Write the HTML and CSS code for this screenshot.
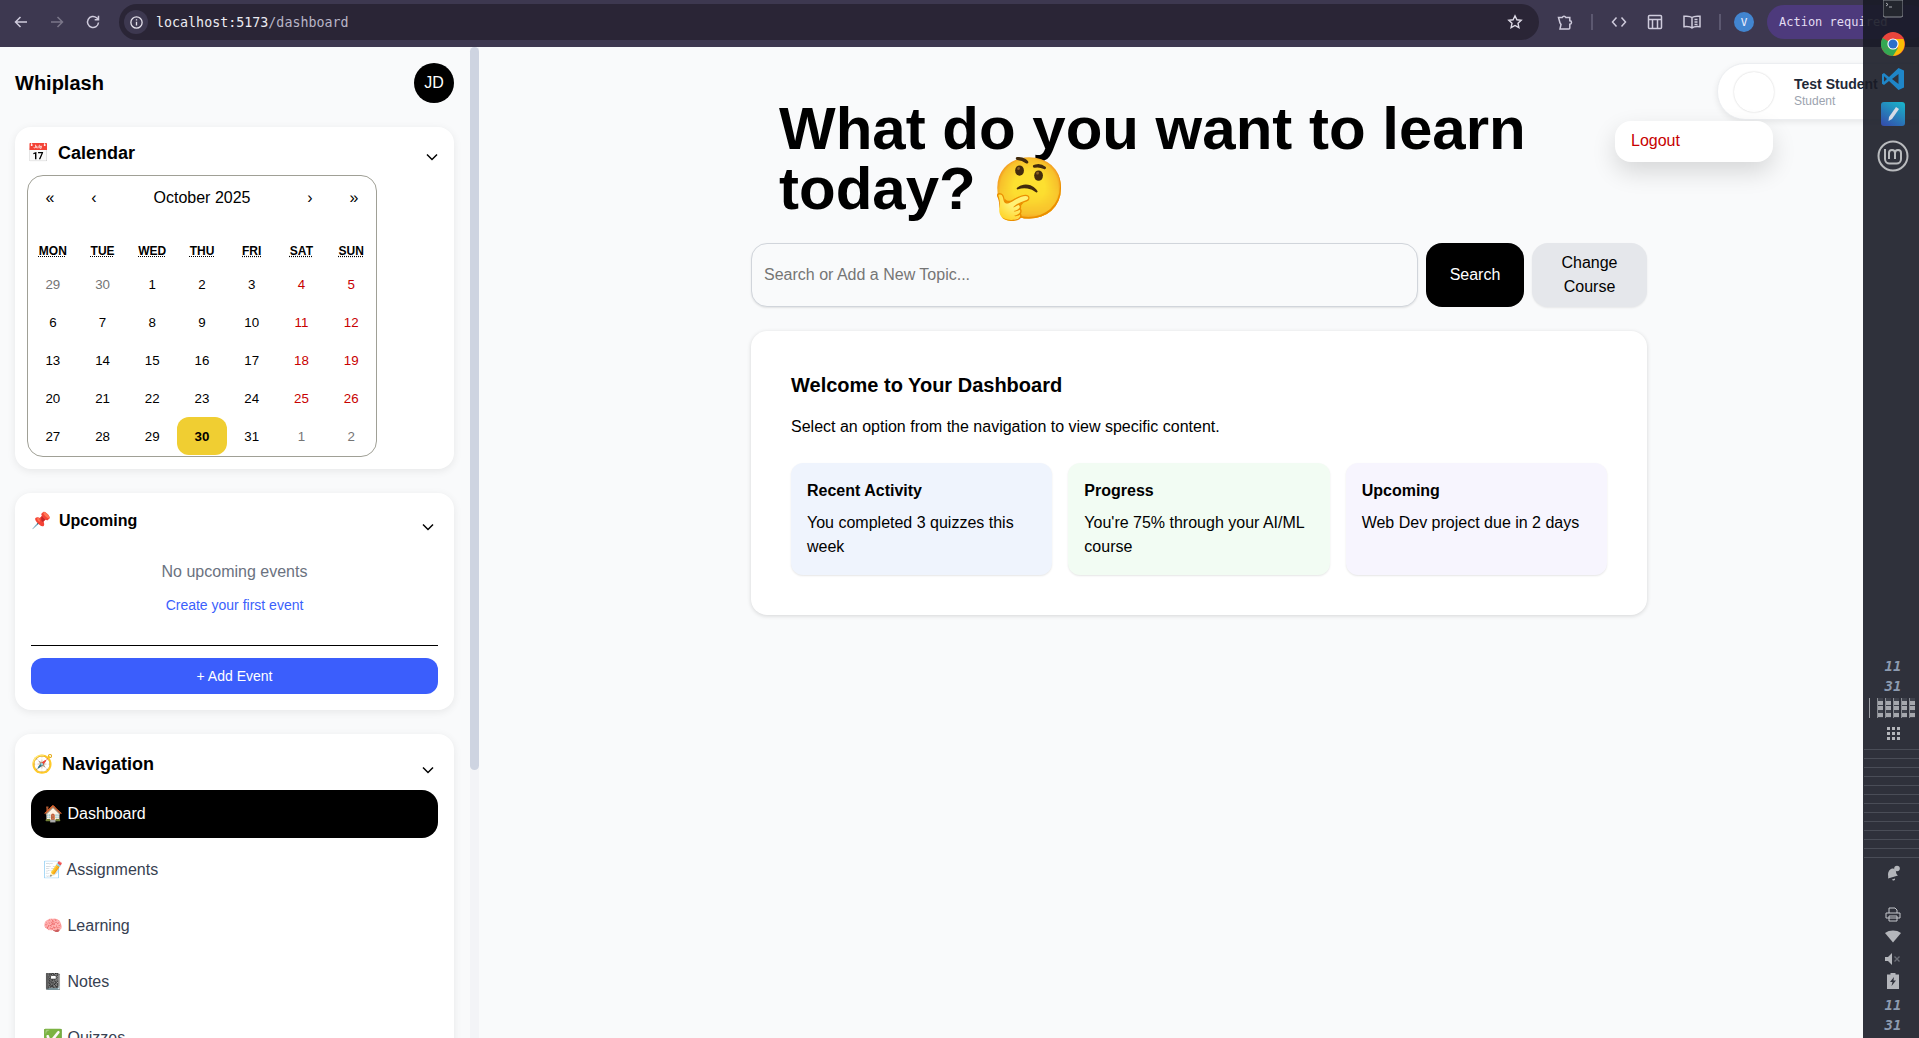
FILE: index.html
```html
<!DOCTYPE html>
<html lang="en">
<head>
    <meta charset="UTF-8">
    <meta name="viewport" content="width=device-width, initial-scale=1.0">
    <title>Whiplash</title>
    <link rel="stylesheet" href="styles.css">
</head>
<body>
    <header class="toolbar">
        <svg class="tool-icon" viewBox="0 0 16 16"><path d="M14 8H2.5M7.5 3 2.5 8l5 5"/></svg>
        <svg class="tool-icon dim" viewBox="0 0 16 16"><path d="M2 8h11.5M8.5 3l5 5-5 5"/></svg>
        <svg class="tool-icon" viewBox="0 0 16 16"><path d="M13.5 8.5A5.5 5.5 0 1 1 11.6 3.8L13.5 5.5M13.5 1.8v3.9H9.7"/></svg>
        <div class="omnibox">
            <span class="site-info">
                <svg viewBox="0 0 16 16"><circle cx="8" cy="8" r="6"/><path d="M8 7.2v4M8 4.6v1.2"/></svg>
            </span>
            <span class="url">localhost:5173<span class="url-path">/dashboard</span></span>
            <svg class="star" viewBox="0 0 16 16"><path d="m8 1.8 1.9 4 4.3.5-3.2 3 .9 4.4L8 11.5l-3.900 2.200.9-4.400-3.200-3 4.300-.5z"/></svg>
        </div>
        <svg class="tool-icon puzzle" viewBox="0 0 16 16"><path d="M1.500 3.500h3.700a2 2 0 0 1 3.600 0h4v3.300a1.700 1.700 0 0 1 0 3.400v3.800a1 1 0 0 1-1 1H3l1-4.500-1-1.500z"/></svg>
        <span class="tool-sep"></span>
        <svg class="tool-icon code" viewBox="0 0 16 16"><path d="M5.500 3.500 1.500 8l4 4.500M10.500 3.500l4 4.500-4 4.500"/></svg>
        <svg class="tool-icon panel" viewBox="0 0 16 16"><rect x="1.500" y="1.500" width="13" height="13" rx="1"/><path d="M1.500 5.500h13M5.500 5.500v9M10.500 5.500v9"/></svg>
        <svg class="tool-icon book" viewBox="0 0 18 16"><path d="M9 3.500C7.500 2.300 4 2 1 2.300v10.400c3-.3 6.500 0 8 1.300 1.500-1.300 5-1.600 8-1.300V2.300C14 2 10.500 2.300 9 3.500zM9 3.500V14M11.500 5.500h3M11.500 8h3M11.500 10.500h3"/></svg>
        <span class="tool-sep last"></span>
        <span class="profile-dot">V</span>
        <span class="action-pill">Action required</span>
    </header>

    <div class="app">
        <aside class="sidebar">
            <div class="sidebar-inner">
                <div class="brand-row">
                    <span class="brand">Whiplash</span>
                    <span class="avatar">JD</span>
                </div>

                <section class="panel-card calendar-card">
                    <div class="panel-head">
                        <h3 class="panel-title big"><span class="head-emoji">📅</span>Calendar</h3>
                        <svg class="chevron" viewBox="0 0 12 8"><path d="m1 1.500 5 5 5-5"/></svg>
                    </div>
                    <div class="calendar">
                        <div class="cal-nav">
                            <span>«</span><span>‹</span><span class="cal-label">October 2025</span><span>›</span><span>»</span>
                        </div>
                        <div class="cal-weekdays">
                            <span>Mon</span><span>Tue</span><span>Wed</span><span>Thu</span><span>Fri</span><span>Sat</span><span>Sun</span>
                        </div>
                        <div class="cal-days">
                            <span class="other">29</span><span class="other">30</span><span>1</span><span>2</span><span>3</span><span class="weekend">4</span><span class="weekend">5</span>
                            <span>6</span><span>7</span><span>8</span><span>9</span><span>10</span><span class="weekend">11</span><span class="weekend">12</span>
                            <span>13</span><span>14</span><span>15</span><span>16</span><span>17</span><span class="weekend">18</span><span class="weekend">19</span>
                            <span>20</span><span>21</span><span>22</span><span>23</span><span>24</span><span class="weekend">25</span><span class="weekend">26</span>
                            <span>27</span><span>28</span><span>29</span><span class="today">30</span><span>31</span><span class="other">1</span><span class="other">2</span>
                        </div>
                    </div>
                </section>

                <section class="panel-card">
                    <div class="panel-head wide">
                        <h3 class="panel-title"><span class="head-emoji small">📌</span>Upcoming</h3>
                        <svg class="chevron" viewBox="0 0 12 8"><path d="m1 1.500 5 5 5-5"/></svg>
                    </div>
                    <p class="empty-text">No upcoming events</p>
                    <a class="empty-link" href="#">Create your first event</a>
                    <hr class="panel-rule">
                    <button class="add-event">+ Add Event</button>
                </section>

                <section class="panel-card nav-card">
                    <div class="panel-head wide">
                        <h3 class="panel-title big"><span class="head-emoji">🧭</span>Navigation</h3>
                        <svg class="chevron" viewBox="0 0 12 8"><path d="m1 1.500 5 5 5-5"/></svg>
                    </div>
                    <nav class="side-nav">
                        <a class="active" href="#">🏠 Dashboard</a>
                        <a href="#">📝 Assignments</a>
                        <a href="#">🧠 Learning</a>
                        <a href="#">📓 Notes</a>
                        <a href="#">✅ Quizzes</a>
                    </nav>
                </section>
            </div>
            <div class="scroll-track"><div class="scroll-thumb"></div></div>
        </aside>

        <main class="main">
            <div class="user-pill">
                <span class="user-photo"></span>
                <div>
                    <div class="user-name">Test Student</div>
                    <div class="user-role">Student</div>
                </div>
            </div>
            <div class="user-menu">Logout</div>

            <div class="content">
                <h1 class="hero">What do you want to learn today? 🤔</h1>
                <div class="search-row">
                    <input class="search-input" type="text" placeholder="Search or Add a New Topic...">
                    <button class="search-btn">Search</button>
                    <button class="course-btn">Change Course</button>
                </div>
                <section class="welcome">
                    <h2>Welcome to Your Dashboard</h2>
                    <p>Select an option from the navigation to view specific content.</p>
                    <div class="welcome-grid">
                        <div class="info-card blue">
                            <h4>Recent Activity</h4>
                            <p>You completed 3 quizzes this week</p>
                        </div>
                        <div class="info-card green">
                            <h4>Progress</h4>
                            <p>You're 75% through your AI/ML course</p>
                        </div>
                        <div class="info-card purple">
                            <h4>Upcoming</h4>
                            <p>Web Dev project due in 2 days</p>
                        </div>
                    </div>
                </section>
            </div>
        </main>
    </div>

    <!-- desktop panel, sits over the browser window -->
    <aside class="dock">
        <svg class="dock-terminal" viewBox="0 0 20 18"><path class="term-body" d="M0 0h20v15a2 2 0 0 1-2 2H2a2 2 0 0 1-2-2z"/><path class="term-mark" d="m3 3 2 1.500-2 1.500M6 7h3"/></svg>
        <svg class="dock-app chrome" viewBox="0 0 24 24">
            <circle cx="12" cy="12" r="12" fill="#e8453c"/>
            <path d="M12 12 1.600 18A12 12 0 0 1 1.600 6z" fill="#34a853"/>
            <path d="M12 12 1.600 18A12 12 0 0 0 12 24l6-6z" fill="#34a853"/>
            <path d="M12 7h10.400A12 12 0 0 1 12 24l5-8z" fill="#fbbc05"/>
            <circle cx="12" cy="12" r="5.600" fill="#fff"/>
            <circle cx="12" cy="12" r="4.500" fill="#2a6fc9"/>
        </svg>
        <svg class="dock-app vscode" viewBox="0 0 24 24">
            <path d="M17.500 1 23 3.500v17L17.500 23 8 14l-5 4-2-1.200V7.200L3 6l5 4z" fill="#1f86c8"/>
            <path d="M17.500 7 11 12l6.500 5z" fill="#2f323c"/>
            <path d="M3 9.200v5.600L6 12z" fill="#2f323c"/>
        </svg>
        <svg class="dock-app pen" viewBox="0 0 24 24">
            <defs><linearGradient id="penfill" x1="0.800" y1="0" x2="0.200" y2="1"><stop offset="0" stop-color="#1ab0c8"/><stop offset="1" stop-color="#3350ac"/></linearGradient></defs>
            <rect width="24" height="24" rx="3" fill="url(#penfill)"/>
            <path d="M15 5l3 2-7 10-3.500 2 .5-4z" fill="#d5dbe6"/>
        </svg>
        <svg class="dock-mint" viewBox="0 0 32 32">
            <circle cx="16" cy="16" r="14.500"/>
            <path d="M8 9v10a4.500 4.500 0 0 0 4.500 4.500h7a4.500 4.500 0 0 0 4.500-4.500v-6a3 3 0 0 0-6 0v6M18 13a3 3 0 0 0-6 0v6"/>
        </svg>

        <div class="dock-clock first"><span>11</span><span>31</span></div>
        <div class="pager">
            <span class="pager-bar"></span>
            <span class="pager-cell"></span><span class="pager-cell"></span><span class="pager-cell"></span><span class="pager-cell"></span><span class="pager-cell"></span>
        </div>
        <svg class="dock-dots" viewBox="0 0 13 13">
            <rect width="3" height="3"/><rect x="5" width="3" height="3"/><rect x="10" width="3" height="3"/>
            <rect y="5" width="3" height="3"/><rect x="5" y="5" width="3" height="3"/><rect x="10" y="5" width="3" height="3"/>
            <rect y="10" width="3" height="3"/><rect x="5" y="10" width="3" height="3"/><rect x="10" y="10" width="3" height="3"/>
        </svg>
        <div class="window-list">
            <span></span><span></span><span></span><span></span><span></span><span></span><span></span><span></span><span></span><span></span><span></span><span></span><span></span>
        </div>
        <svg class="tray bell" viewBox="0 0 16 16"><path d="M7 3.500C9 3 11 4.500 11 6.500c0 2 .8 3 2 4l-10 3c.5-1.500 0-3 0-4.500 0-2.500 2-5 4-5.500zM7 14.500l3-1a1.500 1.500 0 0 1-3 1z"/><circle cx="12" cy="3.500" r="2.800"/></svg>
        <svg class="tray printer" viewBox="0 0 16 16"><path d="M4 6V1h6l2 2v3M1 6h14v5H1zM4 9h8v5H4z"/></svg>
        <svg class="tray wifi" viewBox="0 0 16 12"><path d="M0 2.500C4.500-.8 11.500-.8 16 2.500L8 12z"/></svg>
        <svg class="tray mute" viewBox="0 0 16 12"><path class="speaker" d="M0 4h3l4-4v12L3 8H0z"/><path class="cross" d="m9.500 3.500 5 5M14.500 3.500l-5 5"/></svg>
        <svg class="tray battery" viewBox="0 0 12 16"><path d="M3.500 0h5v1.500H12V16H0V1.500h3.500zM7 4 3 9h2.500L4.500 13 9 7.500H6.500z" fill-rule="evenodd"/></svg>
        <div class="dock-clock last"><span>11</span><span>31</span></div>
    </aside>
</body>
</html>
```

FILE: styles.css
```css
* {
    box-sizing: border-box;
}

html, body {
    height: 100%;
}

body {
    margin: 0;
    overflow: hidden;
    display: flex;
    flex-direction: column;
    font-family: "Liberation Sans", Arial, sans-serif;
    color: #000;
    background: #f9fafb;
}

/* browser chrome */
.toolbar {
    height: 47px;
    flex: none;
    display: flex;
    align-items: center;
    background: #3d3850;
    padding: 0 0 3px 13px;
    color: #cfcbdc;
}

.tool-icon {
    width: 16px;
    height: 16px;
    fill: none;
    stroke: #cfcbdc;
    stroke-width: 1.5;
    margin-right: 20px;
    flex: none;
}

.tool-icon.dim {
    stroke: #7b7689;
}

.omnibox {
    width: 1420px;
    height: 36px;
    flex: none;
    margin-left: -2px;
    border-radius: 18px;
    background: #2a2536;
    display: flex;
    align-items: center;
    padding: 0 16px 0 5px;
}

.site-info {
    width: 24px;
    height: 24px;
    border-radius: 50%;
    background: #3d3850;
    display: flex;
    align-items: center;
    justify-content: center;
}

.site-info svg {
    width: 15px;
    height: 15px;
    fill: none;
    stroke: #e3e0ea;
    stroke-width: 1.4;
}

.url {
    margin-left: 8px;
    font-family: "DejaVu Sans Mono", monospace;
    font-size: 13.33px;
    color: #ecebf1;
    flex: 1;
}

.url-path {
    color: #b9b5c6;
}

.star {
    width: 16px;
    height: 16px;
    fill: none;
    stroke: #dedbe6;
    stroke-width: 1.4;
}

.tool-icon.puzzle {
    margin-left: 18px;
    margin-right: 0;
}

.tool-sep {
    width: 2px;
    height: 16px;
    background: #5c5870;
    margin: 0 18px;
    flex: none;
}

.tool-sep.last {
    margin-right: 13px;
}

.tool-icon.code {
    margin-right: 20px;
}

.tool-icon.panel {
    margin-right: 20px;
}

.tool-icon.book {
    width: 18px;
    margin-right: 0;
}

.profile-dot {
    width: 20px;
    height: 20px;
    border-radius: 50%;
    background: #4285d0;
    color: #eef;
    font-family: "DejaVu Sans Mono", monospace;
    font-size: 11px;
    display: flex;
    align-items: center;
    justify-content: center;
    flex: none;
}

.action-pill {
    margin-left: 13px;
    width: 160px;
    height: 34px;
    flex: none;
    border-radius: 17px;
    background: #4d3a7c;
    color: #e2dcf2;
    font-family: "DejaVu Sans Mono", monospace;
    font-size: 12px;
    line-height: 34px;
    padding-left: 12px;
    white-space: nowrap;
}

/* app layout */
.app {
    flex: 1;
    min-height: 0;
    display: flex;
}

.sidebar {
    width: 479px;
    flex: none;
    overflow: hidden;
    display: flex;
}

.sidebar-inner {
    flex: 1;
    min-width: 0;
    padding: 16px 16px 16px 15px;
}

.scroll-track {
    width: 9px;
    flex: none;
    background: #f3f4f7;
}

.scroll-thumb {
    height: 723px;
    background: #ced4e1;
    border-radius: 5px;
}

.brand-row {
    display: flex;
    justify-content: space-between;
    align-items: center;
    margin-bottom: 24px;
}

.brand {
    font-size: 20px;
    font-weight: bold;
}

.avatar {
    width: 40px;
    height: 40px;
    border-radius: 50%;
    background: #000;
    color: #fff;
    font-size: 16px;
    display: flex;
    align-items: center;
    justify-content: center;
}

.panel-card {
    background: #fff;
    border-radius: 16px;
    padding: 16px;
    margin-bottom: 24px;
    box-shadow: 0 2px 8px rgba(0, 0, 0, 0.08);
}

.calendar-card {
    padding: 12px;
}

.panel-head {
    display: flex;
    justify-content: space-between;
    align-items: flex-start;
    height: 36px;
    padding-right: 4px;
}

.panel-head.wide {
    padding-right: 4px;
    height: 24px;
}

.panel-title {
    margin: 1px 0 0;
    font-size: 16px;
    line-height: 22px;
    display: flex;
    align-items: center;
}

.panel-title.big {
    font-size: 18px;
    line-height: 26px;
}

.head-emoji {
    margin-right: 9px;
}

.head-emoji.small {
    margin-right: 8px;
}

.chevron {
    width: 12px;
    height: 8px;
    margin-top: 14px;
    fill: none;
    stroke: #000;
    stroke-width: 1.5;
}

.nav-card .chevron {
    margin-top: 16px;
}

/* calendar */
.calendar {
    width: 350px;
    border: 1px solid #a0a096;
    border-radius: 16px;
    padding-bottom: 1px;
}

.cal-nav {
    display: grid;
    grid-template-columns: 44px 44px 1fr 44px 44px;
    height: 44px;
    margin-bottom: 16px;
    align-items: center;
    text-align: center;
    font-size: 16px;
}

.cal-weekdays {
    display: grid;
    grid-template-columns: repeat(7, 1fr);
    height: 29px;
    align-items: center;
    text-align: center;
    font-size: 12px;
    font-weight: bold;
    text-transform: uppercase;
}

.cal-weekdays span {
    text-decoration: underline dotted;
}

.cal-days {
    display: grid;
    grid-template-columns: repeat(7, 1fr);
    grid-auto-rows: 38px;
    font-size: 13.33px;
}

.cal-days span {
    display: flex;
    align-items: center;
    justify-content: center;
}

.cal-days .other {
    color: #757575;
}

.cal-days .weekend {
    color: #c80000;
}

.cal-days .today {
    background: #f0ce32;
    border-radius: 12px;
    font-weight: bold;
}

/* upcoming */
.empty-text {
    margin: 27px 0 0;
    text-align: center;
    font-size: 16px;
    line-height: 24px;
    color: #6b7280;
}

.empty-link {
    display: block;
    margin-top: 11px;
    text-align: center;
    font-size: 14px;
    line-height: 20px;
    color: #3b5ffc;
    text-decoration: none;
}

.panel-rule {
    border: 0;
    border-top: 1px solid #000;
    margin: 30px 0 12px;
}

.add-event {
    display: block;
    width: 100%;
    height: 36px;
    border: 0;
    border-radius: 12px;
    background: #3b5efc;
    color: #fff;
    font-family: inherit;
    font-size: 14px;
}

/* navigation */
.side-nav {
    margin-top: 16px;
    display: flex;
    flex-direction: column;
    gap: 8px;
}

.side-nav a {
    height: 48px;
    border-radius: 16px;
    padding: 0 12px 2px;
    display: flex;
    align-items: center;
    white-space: pre;
    font-size: 16px;
    color: #374151;
    text-decoration: none;
}

.side-nav a.active {
    background: #000;
    color: #fff;
}

/* main column */
.main {
    flex: 1;
    min-width: 0;
    position: relative;
}

.content {
    width: 896px;
    margin: 0 auto;
    padding-top: 52px;
}

.hero {
    margin: 0 0 24px;
    padding-left: 28px;
    padding-right: 60px;
    font-size: 60px;
    line-height: 60px;
    font-weight: bold;
}

.search-row {
    display: flex;
    gap: 8px;
    height: 64px;
}

.search-input {
    flex: 1;
    min-width: 0;
    border: 1px solid #d1d5db;
    border-radius: 16px;
    background: #f9fafb;
    padding: 0 12px;
    font-family: inherit;
    font-size: 16px;
    box-shadow: 0 1px 2px rgba(0, 0, 0, 0.1);
    outline: none;
}

.search-btn, .course-btn {
    border: 0;
    border-radius: 16px;
    font-family: inherit;
    font-size: 16px;
    line-height: 24px;
}

.search-btn {
    width: 98px;
    background: #000;
    color: #fff;
}

.course-btn {
    width: 115px;
    padding: 0 24px;
    background: #e5e7eb;
    color: #000;
    box-shadow: 0 1px 2px rgba(0, 0, 0, 0.08);
}

.welcome {
    margin-top: 24px;
    padding: 40px;
    background: #fff;
    border-radius: 16px;
    box-shadow: 0 1px 4px rgba(0, 0, 0, 0.15);
}

.welcome h2 {
    margin: 0;
    font-size: 20px;
    line-height: 28px;
}

.welcome > p {
    margin: 16px 0 0;
    font-size: 16px;
    line-height: 24px;
}

.welcome-grid {
    margin-top: 24px;
    display: grid;
    grid-template-columns: repeat(3, 1fr);
    gap: 16px;
}

.info-card {
    padding: 16px;
    border-radius: 12px;
    box-shadow: 0 1px 2px rgba(0, 0, 0, 0.1);
}

.info-card h4 {
    margin: 0 0 8px;
    font-size: 16px;
    line-height: 24px;
}

.info-card p {
    margin: 0;
    font-size: 16px;
    line-height: 24px;
}

.info-card.blue {
    background: #eff4fd;
}

.info-card.green {
    background: #f2fcf3;
}

.info-card.purple {
    background: #f7f5fe;
}

/* user menu, floats over the page */
.user-pill {
    position: absolute;
    top: 16px;
    right: 0;
    width: 202px;
    height: 57px;
    padding-left: 16px;
    display: flex;
    align-items: center;
    gap: 20px;
    background: #fff;
    border: 1px solid #eceef1;
    border-radius: 28px 0 0 28px;
    box-shadow: 0 2px 6px rgba(0, 0, 0, 0.08);
}

.user-photo {
    width: 40px;
    height: 40px;
    border-radius: 50%;
    background: #fff;
    box-shadow: 0 0 2px rgba(0, 0, 0, 0.2);
}

.user-name {
    font-size: 14px;
    line-height: 18px;
    font-weight: bold;
    color: #1f2937;
    white-space: nowrap;
}

.user-role {
    font-size: 12px;
    line-height: 16px;
    color: #9ca3af;
}

.user-menu {
    position: absolute;
    top: 74px;
    left: 1136px;
    width: 158px;
    height: 41px;
    padding-left: 16px;
    line-height: 39px;
    font-size: 16px;
    color: #c70000;
    background: #fff;
    border-radius: 16px;
    box-shadow: 0 10px 24px rgba(0, 0, 0, 0.14);
}

/* desktop panel */
.dock {
    position: absolute;
    top: 0;
    right: 0;
    bottom: 0;
    width: 56px;
    padding-left: 4px;
    display: flex;
    flex-direction: column;
    align-items: center;
    background: rgba(24, 27, 38, 0.9);
}

.dock-terminal {
    width: 20px;
    height: 18px;
    flex: none;
}

.term-body {
    fill: #23262e;
    stroke: #8a8d94;
    stroke-width: 1;
}

.term-mark {
    fill: none;
    stroke: #c8cad0;
    stroke-width: 0.8;
}

.dock-app {
    width: 24px;
    height: 24px;
    flex: none;
}

.chrome {
    margin-top: 14px;
}

.vscode {
    margin-top: 11px;
}

.pen {
    margin-top: 11px;
}

.dock-mint {
    width: 32px;
    height: 32px;
    flex: none;
    margin-top: 14px;
    fill: none;
    stroke: #b9bbbe;
    stroke-width: 2;
}

.dock-clock {
    display: flex;
    flex-direction: column;
    align-items: center;
    font-family: "DejaVu Sans Mono", monospace;
    font-style: italic;
    font-weight: bold;
    font-size: 14px;
    line-height: 20px;
    color: #8d9bb0;
}

.dock-clock.first {
    margin-top: 484px;
}

.dock-clock.last {
    margin-top: 6px;
}

.pager {
    margin-top: 2px;
    margin-left: -3px;
    display: flex;
    gap: 2px;
    height: 20px;
    flex: none;
}

.pager-bar {
    width: 1px;
    background: #9a9ca2;
    margin-right: 5px;
}

.pager-cell {
    width: 6px;
    background: repeating-linear-gradient(to bottom, #3f424c 0 3px, #a5a7ad 3px 7px, #3f424c 7px 8px, #a5a7ad 8px 12px);
    border-left: 1px solid #8a8d94;
}

.dock-dots {
    width: 13px;
    height: 13px;
    flex: none;
    margin-top: 9px;
    fill: #b4b6bb;
}

.window-list {
    align-self: stretch;
    margin: 9px 0 0 -3px;
    display: flex;
    flex-direction: column;
    gap: 8px;
    flex: none;
}

.window-list span {
    height: 1px;
    background: #4a4d57;
}

.tray {
    flex: none;
    fill: #b4b6bb;
}

.bell {
    width: 16px;
    height: 16px;
    margin-top: 7px;
}

.printer {
    width: 16px;
    height: 16px;
    margin-top: 26px;
    fill: none;
    stroke: #c5c7cc;
    stroke-width: 1;
}

.wifi {
    width: 16px;
    height: 13px;
    margin-top: 7px;
}

.mute {
    width: 16px;
    height: 12px;
    margin-top: 10px;
}

.mute .cross {
    fill: none;
    stroke: #6a6d75;
    stroke-width: 1.4;
}

.battery {
    width: 12px;
    height: 16px;
    margin-top: 8px;
}
```
